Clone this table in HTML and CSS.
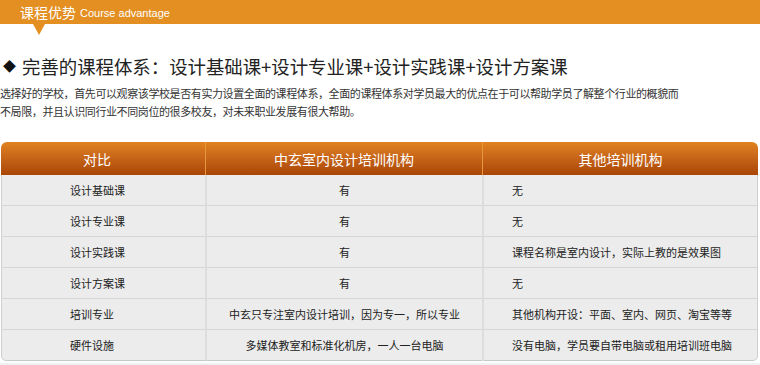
FILE: index.html
```html
<!DOCTYPE html>
<html lang="zh-CN">
<head>
<meta charset="utf-8">
<title>课程优势</title>
<link rel="stylesheet" href="styles.css">
</head>
<body>
<div class="topbar">
  <span class="title-cn">课程优势</span>
  <span class="title-en">Course advantage</span>
</div>
<h2 class="heading"><span class="diamond">◆</span>完善的课程体系：设计基础课+设计专业课+设计实践课+设计方案课</h2>
<p class="intro">选择好的学校，首先可以观察该学校是否有实力设置全面的课程体系，全面的课程体系对学员最大的优点在于可以帮助学员了解整个行业的概貌而<br>不局限，并且认识同行业不同岗位的很多校友，对未来职业发展有很大帮助。</p>
<table class="compare">
  <colgroup>
    <col class="w1"><col class="w2"><col class="w3">
  </colgroup>
  <thead>
    <tr><th class="c1">对比</th><th class="c2">中玄室内设计培训机构</th><th class="c3">其他培训机构</th></tr>
  </thead>
  <tbody>
    <tr><td class="c1">设计基础课</td><td class="c2">有</td><td class="c3">无</td></tr>
    <tr><td class="c1">设计专业课</td><td class="c2">有</td><td class="c3">无</td></tr>
    <tr><td class="c1">设计实践课</td><td class="c2">有</td><td class="c3">课程名称是室内设计，实际上教的是效果图</td></tr>
    <tr><td class="c1">设计方案课</td><td class="c2">有</td><td class="c3">无</td></tr>
    <tr><td class="c1">培训专业</td><td class="c2">中玄只专注室内设计培训，因为专一，所以专业</td><td class="c3">其他机构开设：平面、室内、网页、淘宝等等</td></tr>
    <tr><td class="c1">硬件设施</td><td class="c2">多媒体教室和标准化机房，一人一台电脑</td><td class="c3">没有电脑，学员要自带电脑或租用培训班电脑</td></tr>
  </tbody>
</table>
<div class="bottom-band"></div>
</body>
</html>
```
FILE: styles.css
```css
html, body {
  margin: 0;
  padding: 0;
  background: #fff;
  font-family: "Noto Sans CJK SC", "Liberation Sans", sans-serif;
  color: #333;
}

.topbar {
  position: relative;
  height: 24px;
  background: #e38f22;
  display: flex;
  align-items: center;
  padding-left: 20px;
  color: #fff;
}
.topbar::after {
  content: "";
  position: absolute;
  left: 33px;
  top: 24px;
  width: 0;
  height: 0;
  border-left: 6.5px solid transparent;
  border-right: 6.5px solid transparent;
  border-top: 11px solid #e38f22;
}
.title-cn {
  font-size: 14px;
  line-height: 24px;
}
.title-en {
  font-family: "Liberation Sans", Arial, sans-serif;
  font-size: 11px;
  margin-left: 4px;
  line-height: 24px;
  padding-top: 2px;
}

.heading {
  margin: 30px 0 0 0;
  font-size: 18.4px;
  font-weight: normal;
  line-height: 24px;
  color: #222;
  display: flex;
  align-items: center;
}
.diamond {
  font-size: 13px;
  width: 19px;
  margin-left: 3px;
  color: #111;
}

.intro {
  margin: 6px 0 0 0;
  font-size: 11px;
  line-height: 18px;
  letter-spacing: -0.4px;
  color: #333;
}

.compare {
  margin: 22px 0 0 1px;
  width: 757px;
  border-collapse: separate;
  border-spacing: 0;
  table-layout: fixed;
}
.compare .w1 { width: 204px; }
.compare .w2 { width: 277px; }
.compare .w3 { width: 276px; }

.compare th,
.compare td {
  box-sizing: border-box;
}
.compare th {
  height: 33px;
  padding: 0;
  font-size: 14px;
  font-weight: normal;
  color: #fff;
  background: linear-gradient(to bottom, #e1831f 0%, #c8661a 45%, #a94606 100%);
  border-left: 1px solid #e9973f;
}
.compare th.c1 {
  border-left: 0;
  border-top-left-radius: 6px;
  padding-right: 12px;
}
.compare th.c3 {
  border-top-right-radius: 6px;
}

.compare td {
  height: 31px;
  padding: 0;
  font-size: 11px;
  color: #222;
  background: #ececec;
  border-bottom: 1px solid #d6d6d6;
  border-left: 2px solid #dddddd;
}
.compare td.c1 {
  border-left: 1px solid #cfcfcf;
  text-align: left;
  padding-left: 68px;
}
.compare td.c2 {
  text-align: center;
}
.compare td.c3 {
  text-align: left;
  padding-left: 28px;
  border-right: 1px solid #cfcfcf;
}
.compare tbody tr:last-child td {
  border-bottom: 1px solid #c9c9c9;
}
.compare tbody tr:last-child td.c1 {
  border-bottom-left-radius: 5px;
}
.compare tbody tr:last-child td.c3 {
  border-bottom-right-radius: 5px;
}

.bottom-band {
  margin-top: 2px;
  height: 8px;
  background: #f0f0f0;
}
```
